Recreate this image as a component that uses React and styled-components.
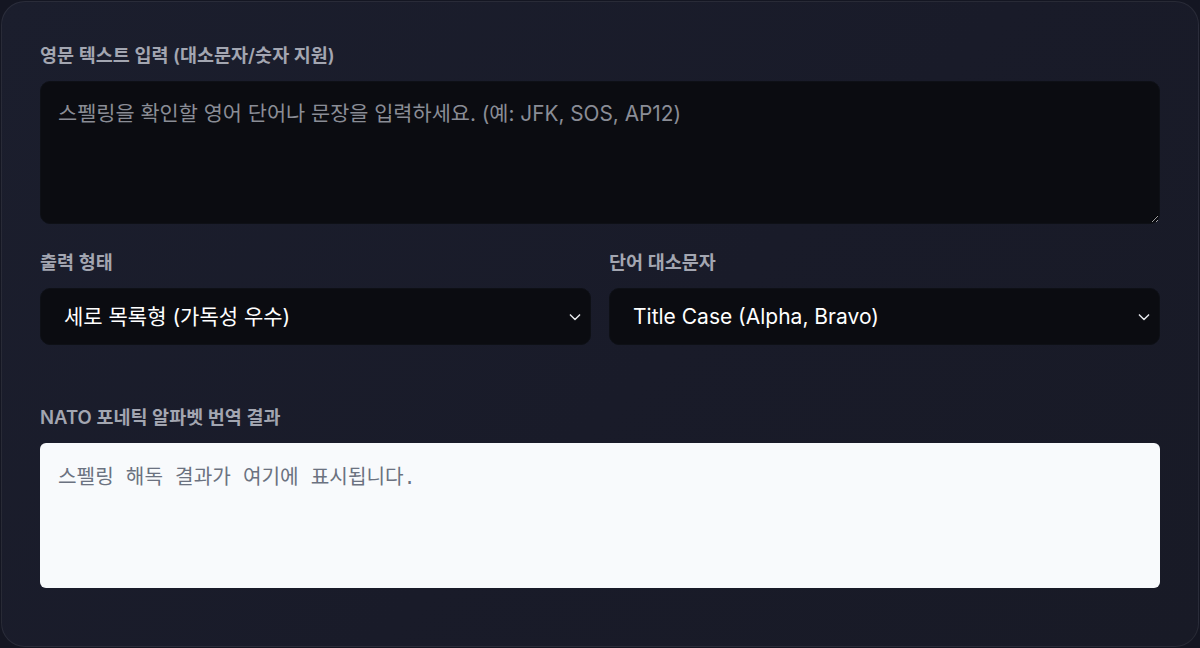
import React from "react";
import styled, { createGlobalStyle } from "styled-components";

const Global = createGlobalStyle`
  html, body { margin: 0; padding: 0; background: #141622; }
  * { box-sizing: border-box; }
  #root { padding: 1px; }
`;

const Card = styled.div`
  height: 646px;
  border-radius: 24px;
  border: 1px solid rgba(255, 255, 255, 0.07);
  background: linear-gradient(135deg, #1b1e2d 0%, #191b29 55%, #181a26 100%);
  padding: 40px 38px 0 38px;
  font-family: Inter, "Noto Sans CJK KR", sans-serif;
  display: flex;
  flex-direction: column;
`;

const Field = styled.div`
  display: flex;
  flex-direction: column;
  min-width: 0;
  margin-top: ${(p) => p.$mt || 0}px;
`;

const Label = styled.label`
  font-size: 18.5px;
  font-weight: 600;
  line-height: 26px;
  color: #a3a6b1;
  margin-bottom: 13px;
`;

const TextArea = styled.textarea`
  height: 143px;
  width: 100%;
  resize: vertical;
  background: #0b0c11;
  border: 1px solid #0e1016;
  border-radius: 10px;
  padding: 17px 17px;
  color: #e5e7eb;
  font-family: Inter, "Noto Sans CJK KR", sans-serif;
  font-size: 20.8px;
  line-height: 30px;
  outline: none;
  &::placeholder { color: #8a8d96; }
`;

const Row = styled.div`
  display: grid;
  grid-template-columns: 1fr 1fr;
  gap: 18px;
  margin-top: 25px;
`;

const SelectWrap = styled.div`
  position: relative;
`;

const Select = styled.select`
  appearance: none;
  -webkit-appearance: none;
  width: 100%;
  height: 57px;
  background: #0b0c11;
  border: 1px solid #0e1016;
  border-radius: 10px;
  padding: 0 40px 0 23px;
  color: #ffffff;
  font-family: Inter, "Noto Sans CJK KR", sans-serif;
  font-size: 21px;
  outline: none;
`;

const Chevron = styled.svg`
  position: absolute;
  right: 6px;
  top: 50%;
  transform: translateY(-50%);
  pointer-events: none;
`;

const Result = styled.div`
  height: 145px;
  background: #f8fafc;
  border-radius: 6px;
  padding: 22px 18px;
  font-family: "Liberation Mono", "Noto Sans CJK KR", monospace;
  font-size: 20.2px;
  line-height: 28px;
  color: #6b7280;
`;

function Dropdown({ value, options }) {
  return (
    <SelectWrap>
      <Select defaultValue={value}>
        {options.map((o) => (
          <option key={o}>{o}</option>
        ))}
      </Select>
      <Chevron width="20" height="20" viewBox="0 0 24 24" fill="none" stroke="#e5e7eb" strokeWidth="1.8" strokeLinecap="round" strokeLinejoin="round">
        <path d="M6.5 9.5l5.5 5.5 5.5-5.5" />
      </Chevron>
    </SelectWrap>
  );
}

export default function App() {
  return (
    <>
      <Global />
      <Card>
        <Field>
          <Label>영문 텍스트 입력 (대소문자/숫자 지원)</Label>
          <TextArea placeholder="스펠링을 확인할 영어 단어나 문장을 입력하세요. (예: JFK, SOS, AP12)" />
        </Field>
        <Row>
          <Field>
            <Label>출력 형태</Label>
            <Dropdown value="세로 목록형 (가독성 우수)" options={["세로 목록형 (가독성 우수)", "가로 나열형"]} />
          </Field>
          <Field>
            <Label>단어 대소문자</Label>
            <Dropdown value="Title Case (Alpha, Bravo)" options={["Title Case (Alpha, Bravo)", "UPPER CASE (ALPHA, BRAVO)", "lower case (alpha, bravo)"]} />
          </Field>
        </Row>
        <Field $mt={59}>
          <Label>NATO 포네틱 알파벳 번역 결과</Label>
          <Result>스펠링 해독 결과가 여기에 표시됩니다.</Result>
        </Field>
      </Card>
    </>
  );
}
